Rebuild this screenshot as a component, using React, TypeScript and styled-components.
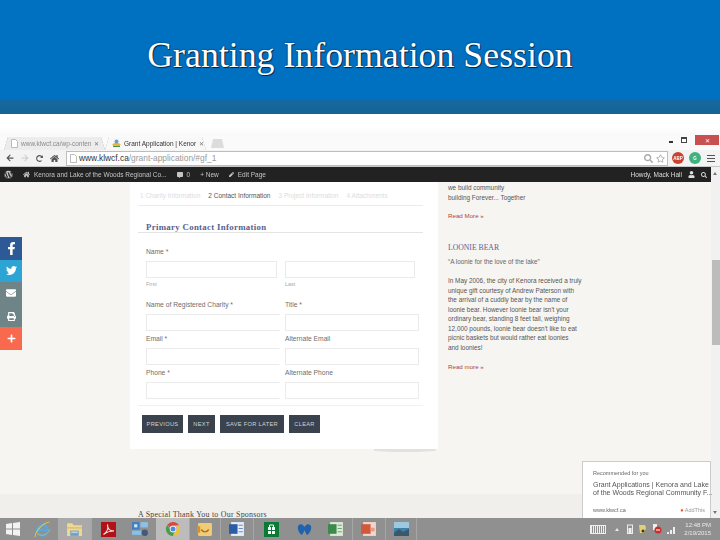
import React from "react";
import styled, { createGlobalStyle } from "styled-components";
import {
  FaFacebookF,
  FaTwitter,
  FaEnvelope,
  FaPrint,
  FaPlus,
  FaWordpress,
  FaHome,
  FaCommentAlt,
  FaPen,
  FaUser,
  FaSearch,
  FaRegStar,
  FaArrowLeft,
  FaArrowRight,
  FaRedoAlt,
} from "react-icons/fa";

const GlobalStyle = createGlobalStyle`
  html, body {
    margin: 0;
    padding: 0;
    background: #fff;
  }
  * {
    box-sizing: border-box;
  }
`;

const Slide = styled.div`
  position: relative;
  width: 720px;
  height: 540px;
  overflow: hidden;
  display: flex;
  flex-direction: column;
  background: #fff;
  font-family: "Liberation Sans", Arial, sans-serif;
`;

const Banner = styled.header`
  height: 100px;
  flex: none;
  display: flex;
  align-items: center;
  justify-content: center;
  padding-top: 9px;
  background: #0070c0;
`;

const BannerTitle = styled.h1`
  margin: 0;
  font: 400 35.8px "Liberation Serif", "Times New Roman", serif;
  color: #fff;
  text-shadow: 1px 1px 0 rgba(0, 0, 0, 0.55), 0 0 2px rgba(0, 0, 0, 0.6);
`;

const Strip = styled.div`
  height: 14px;
  flex: none;
  background: linear-gradient(#16689f, #136596);
`;

const Gap = styled.div`
  height: 21px;
  flex: none;
  background: linear-gradient(#fff 60%, #f9f9f9);
`;

const Browser = styled.div`
  flex: 1;
  min-height: 0;
  display: flex;
  flex-direction: column;
  filter: blur(0.35px);
`;

const TabStrip = styled.div`
  height: 15px;
  flex: none;
  display: flex;
  align-items: flex-end;
  padding-left: 4px;
  background: #fafafa;
`;

const TabShell = styled.div`
  width: 101px;
  height: 13px;
  flex: none;
  filter: drop-shadow(0 0 0.5px #9a9a9a);
`;

const TabBody = styled.div<{ $active?: boolean }>`
  height: 100%;
  display: flex;
  align-items: center;
  gap: 3px;
  padding: 0 6px 0 7px;
  font-size: 6.5px;
  white-space: nowrap;
  color: ${(p) => (p.$active ? "#333" : "#8a8a8a")};
  background: ${(p) => (p.$active ? "#f8f8f8" : "#ececec")};
  clip-path: polygon(4px 0, calc(100% - 4px) 0, 100% 100%, 0 100%);

  svg {
    flex: none;
  }
`;

const TabLabel = styled.span`
  flex: 1;
`;

const TabClose = styled.span`
  font-size: 6px;
  color: #777;
`;

const NewTab = styled.div`
  width: 13px;
  height: 9px;
  margin: 0 0 2px 5px;
  background: #dcdcdc;
  clip-path: polygon(2px 0, calc(100% - 2px) 0, 100% 100%, 0 100%);
`;

const WindowButtons = styled.div`
  margin-left: auto;
  align-self: flex-start;
  display: flex;
  align-items: center;
  height: 10px;
  gap: 8px;
  padding-right: 1px;
`;

const Minimize = styled.span`
  width: 4px;
  height: 2px;
  margin-top: 4px;
  background: #333;
`;

const Restore = styled.span`
  width: 6px;
  height: 6px;
  border: 1px solid #444;
  border-top-width: 2px;
`;

const CloseButton = styled.span`
  width: 24px;
  height: 10px;
  display: flex;
  align-items: center;
  justify-content: center;
  font-size: 6px;
  color: #fff;
  background: #c75050;
`;

const Toolbar = styled.div`
  height: 17px;
  flex: none;
  display: flex;
  align-items: center;
  padding: 0 3px 0 2px;
  background: #f3f3f3;
  border-bottom: 1px solid #c8c8c8;
`;

const NavGlyph = styled.span<{ $dim?: boolean }>`
  width: 15px;
  height: 15px;
  display: flex;
  align-items: center;
  justify-content: center;
  color: ${(p) => (p.$dim ? "#cfcfcf" : "#555")};
`;

const Omnibox = styled.div`
  flex: 1;
  height: 15px;
  display: flex;
  align-items: center;
  gap: 2px;
  margin: 0 4px 0 4px;
  padding: 0 2px 0 3px;
  font-size: 8.4px;
  background: #fff;
  border: 1px solid #bdbdbd;
`;

const UrlHost = styled.span`
  color: #333;
`;

const UrlPath = styled.span`
  margin-left: -2px;
  color: #999;
`;

const OmniIcons = styled.span`
  margin-left: auto;
  display: flex;
  align-items: center;
  gap: 3px;
  color: #aaa;
  font-size: 9px;
`;

const Badge = styled.span<{ $color: string }>`
  width: 12px;
  height: 12px;
  margin-right: 5px;
  display: flex;
  align-items: center;
  justify-content: center;
  font: 700 4.5px "Liberation Sans", sans-serif;
  color: #fff;
  border-radius: 50%;
  background: ${(p) => p.$color};
`;

const Burger = styled.span`
  width: 8px;
  height: 7px;
  margin: 0 2px 0 1px;
  border-top: 1px solid #555;
  border-bottom: 1px solid #555;
  background: linear-gradient(#555, #555) center / 100% 1px no-repeat;
`;

const Viewport = styled.div`
  flex: 1;
  min-height: 0;
  display: flex;
`;

const PageColumn = styled.div`
  flex: 1;
  min-width: 0;
  display: flex;
  flex-direction: column;
`;

const AdminBar = styled.div`
  height: 15px;
  flex: none;
  display: flex;
  align-items: center;
  gap: 10px;
  padding: 0 4px 0 4px;
  font-size: 6.5px;
  color: #c4c4c4;
  background: #222;
  white-space: nowrap;
`;

const AdminItem = styled.span`
  display: flex;
  align-items: center;
  gap: 4px;
`;

const AdminRight = styled(AdminItem)`
  margin-left: auto;
  gap: 6px;
  color: #ddd;
`;

const PageBody = styled.div`
  flex: 1;
  min-height: 0;
  display: flex;
  flex-direction: column;
  background: #f7f5f2;
`;

const ContentRow = styled.div`
  height: 312px;
  flex: none;
  display: flex;
  gap: 10px;
  padding-left: 130px;
`;

const SponsorBand = styled.div`
  flex: 1;
  min-height: 0;
  padding: 16px 0 0 138px;
  overflow: hidden;
  font: 400 7.9px/10px "Liberation Serif", serif;
  letter-spacing: 0.25px;
  color: #444;
  background: #f1efeb;
`;

const FormCard = styled.section`
  position: relative;
  width: 308px;
  height: 267px;
  flex: none;
  padding: 10px 15px 0 8px;
  background: #fff;

  &::after {
    content: "";
    position: absolute;
    right: 2px;
    bottom: -3px;
    width: 62px;
    height: 3px;
    border-radius: 0 0 50% 50%;
    background: rgba(0, 0, 0, 0.08);
  }
`;

const Steps = styled.div`
  display: flex;
  gap: 8px;
  height: 14px;
  padding: 0 0 4px 2px;
  font-size: 6.5px;
  white-space: nowrap;
  border-bottom: 1px solid #ececec;
`;

const Step = styled.span<{ $active?: boolean }>`
  color: ${(p) => (p.$active ? "#555" : "#ddd")};
`;

const SectionTitle = styled.h2`
  margin: 17px 0 0;
  padding: 0 0 0 8px;
  height: 10px;
  font: 700 8.8px/8px "Liberation Serif", serif;
  letter-spacing: 0.32px;
  color: #56618d;
  border-bottom: 1px solid #e4e4e4;
`;

const FieldGrid = styled.div`
  display: grid;
  grid-template-columns: 139px 134px;
  padding: 14px 0 0 8px;
`;

const Field = styled.div`
  display: flex;
  flex-direction: column;
`;

const FieldLabel = styled.label`
  height: 10px;
  font-size: 6.7px;
  line-height: 10px;
  color: #6e6e6e;
`;

const TextBox = styled.div<{ $width: number; $open?: boolean }>`
  width: ${(p) => p.$width}px;
  height: 17px;
  margin: 4px 0 3px;
  background: #fff;
  border: 1px solid #ebebeb;
  border-right-color: ${(p) => (p.$open ? "transparent" : "#ebebeb")};
`;

const Hint = styled.span`
  height: 21px;
  margin-top: -2px;
  font-size: 5.5px;
  line-height: 11px;
  color: #aaa;
`;

const FormFooter = styled.div`
  display: flex;
  gap: 5px;
  margin-top: 3px;
  padding: 9px 0 0 4px;
  border-top: 1px solid #f1f1f1;
`;

const ActionButton = styled.button<{ $width: number }>`
  width: ${(p) => p.$width}px;
  height: 18px;
  padding: 0;
  font: 400 5.7px "Liberation Sans", sans-serif;
  letter-spacing: 0.3px;
  color: #cfd2d6;
  background: #3a424d;
  border: none;
  border-radius: 0;
`;

const Sidebar = styled.aside`
  width: 134px;
  flex: none;
  padding-top: 1px;
  font-size: 6.4px;
  line-height: 9.55px;
  color: #555;
`;

const SideText = styled.p`
  margin: 0;
`;

const ReadMore = styled.a`
  display: block;
  margin-top: 9px;
  font-size: 6.2px;
  color: #a8444a;
`;

const SideTitle = styled.h3`
  margin: 21px 0 3px;
  font: 400 7.7px/12px "Liberation Serif", serif;
  color: #56618d;
`;

const SideQuote = styled.p`
  margin: 0 0 10px;
  color: #666;
`;

const Scrollbar = styled.div`
  position: relative;
  width: 9px;
  flex: none;
  display: flex;
  flex-direction: column;
  padding: 93px 0 0 1px;
  background: #f1f1f1;
`;

const ScrollArrow = styled.span<{ $down?: boolean }>`
  position: absolute;
  left: 2px;
  ${(p) => (p.$down ? "bottom: 4px;" : "top: 5px;")}
  border: 2.5px solid transparent;
  ${(p) =>
    p.$down
      ? "border-bottom: none; border-top: 3px solid #777;"
      : "border-top: none; border-bottom: 3px solid #777;"}
`;

const ScrollThumb = styled.div`
  height: 85px;
  background: #bcbcbc;
`;

const ShareBar = styled.div`
  position: absolute;
  left: 0;
  top: 237px;
  width: 22px;
  display: flex;
  flex-direction: column;
`;

const ShareButton = styled.div<{ $color: string }>`
  height: 22.6px;
  display: flex;
  align-items: center;
  justify-content: center;
  color: #fff;
  background: ${(p) => p.$color};
`;

const Recommend = styled.div`
  position: absolute;
  left: 582px;
  top: 461px;
  width: 129px;
  height: 57px;
  padding: 8px 2px 0 10px;
  display: flex;
  flex-direction: column;
  background: #fff;
  border: 1px solid #ccc;
  border-bottom: none;
  font-size: 5.5px;
  color: #666;
  white-space: nowrap;
`;

const RecommendTitle = styled.div`
  margin-top: 5px;
  font-size: 7px;
  line-height: 8px;
  color: #555;
`;

const RecommendFoot = styled.div`
  display: flex;
  justify-content: space-between;
  margin-top: 10px;
  padding-right: 3px;
`;

const AddThis = styled.span`
  color: #999;
`;

const AddThisMark = styled.span`
  color: #e2582c;
`;

const Taskbar = styled.footer`
  height: 22px;
  flex: none;
  display: flex;
  align-items: center;
  background: #909090;
`;

const TaskSlot = styled.div<{ $width: number; $state?: "open" | "lit" | "active" }>`
  width: ${(p) => p.$width}px;
  height: 22px;
  flex: none;
  display: flex;
  align-items: center;
  justify-content: center;
  background: ${(p) =>
    p.$state === "active" ? "#bcbcbc" : p.$state === "lit" ? "#a9a9a9" : "transparent"};
  border-right: ${(p) => (p.$state ? "1px solid #a6a6a6" : "none")};
`;

const Tray = styled.div`
  margin-left: auto;
  display: flex;
  align-items: center;
  gap: 5px;
  padding-right: 9px;
`;

const Keyboard = styled.span`
  width: 16px;
  height: 9px;
  margin-right: 4px;
  border: 1px solid #eee;
  background: repeating-linear-gradient(90deg, #eee 0 1px, #8f8f8f 1px 2px);
`;

const TrayCaret = styled.span`
  width: 0;
  height: 0;
  margin-right: 3px;
  border: 2.5px solid transparent;
  border-top: none;
  border-bottom: 3px solid #e8e8e8;
`;

const Clock = styled.div`
  margin-left: 3px;
  font-size: 6px;
  line-height: 8px;
  text-align: right;
  color: #e9e9e9;
`;

const WinLogo = () => (
  <svg width="14" height="14" viewBox="0 0 14 14">
    <path d="M0 2l6-1v5.500H0zM7 1l7-1v6.500H7zM0 7.500h6V13l-6-1zM7 7.500h7V14l-7-1z" fill="#f2f2f2" />
  </svg>
);

const IeIcon = () => (
  <svg width="17" height="17" viewBox="0 0 16 16">
    <path d="M3.200 8.500H13A5 5 0 1 0 11.800 12" fill="none" stroke="#56a8e0" strokeWidth="2.200" />
    <path d="M1 15C1.500 9.500 8 2 14.500 1" fill="none" stroke="#e8c04c" strokeWidth="1" />
    <path d="M3 12C7 15 13 13 15 8" fill="none" stroke="#e8c04c" strokeWidth=".6" />
  </svg>
);

const FolderIcon = () => (
  <svg width="17" height="15" viewBox="0 0 16 14">
    <path d="M1 1h5l1 2h8v10H1z" fill="#efd88f" />
    <path d="M1 5h14v1H1z" fill="#d4b566" />
    <path d="M4 8h8v5H4z" fill="#6fa3c8" />
    <path d="M5 9h6v1H5z" fill="#dfeaf2" />
  </svg>
);

const PdfIcon = () => (
  <svg width="15" height="15" viewBox="0 0 15 15">
    <rect width="15" height="15" fill="#b01217" />
    <path d="M2.500 12.500c3-2 5-6 4-10 0 4 2 7 6.500 6.500-4 0-7.500 1-10.500 3.500z" fill="none" stroke="#f7e3e3" strokeWidth="1.100" />
  </svg>
);

const OutlookTiles = () => (
  <svg width="17" height="16" viewBox="0 0 16 15">
    <rect x="0" y="1" width="7" height="7" fill="#3f7fc4" />
    <rect x="8" y="1" width="7" height="5" fill="#8cc0e6" />
    <rect x="0" y="9" width="9" height="4" fill="#8ac0e6" />
    <rect x="2" y="3" width="3" height="3" fill="#cfe5f5" />
    <circle cx="12" cy="11" r="3" fill="#44597c" />
  </svg>
);

const ChromeIcon = () => (
  <svg width="16" height="16" viewBox="0 0 16 16">
    <path d="M8 1a7 7 0 0 1 6.100 3.500H8A3.500 3.500 0 0 0 4.800 6.700L2.400 3.700A7 7 0 0 1 8 1z" fill="#d9473d" />
    <path d="M14.100 4.500A7 7 0 0 1 8 15l3-5a3.500 3.500 0 0 0 0-5.500z" fill="#f2c230" />
    <path d="M2.400 3.700L5 8.500A3.500 3.500 0 0 0 9 11.400L8 15A7 7 0 0 1 2.400 3.700z" fill="#4a9d4f" />
    <circle cx="8" cy="8" r="3.200" fill="#fff" />
    <circle cx="8" cy="8" r="2.500" fill="#4c8bdc" />
  </svg>
);

const MailIcon = () => (
  <svg width="16" height="15" viewBox="0 0 15 14">
    <rect x="1" y="1" width="13" height="12" rx="1" fill="#f0cc76" />
    <path d="M4 7c2 3 5 3 7 0" fill="none" stroke="#a8701f" strokeWidth="1.300" />
    <rect x="0" y="4" width="3" height="6" fill="#d98f2b" />
  </svg>
);

const WordIcon = () => (
  <svg width="16" height="16" viewBox="0 0 15 15">
    <rect x="2" y="1" width="12" height="13" fill="#e6edf6" />
    <rect x="0" y="3" width="8" height="9" fill="#2b5ca6" />
    <path d="M9 4h4M9 7h4M9 10h4" stroke="#6a8fc6" />
  </svg>
);

const StoreIcon = () => (
  <svg width="15" height="15" viewBox="0 0 15 15">
    <rect width="15" height="15" fill="#0b7a35" />
    <rect x="4" y="5" width="7" height="7" fill="#fff" />
    <path d="M5.500 5V3h4v2" fill="none" stroke="#fff" />
    <path d="M7 5h1v7H7zM4 8h7v1H4z" fill="#0b7a35" />
  </svg>
);

const MalwareIcon = () => (
  <svg width="15" height="13" viewBox="0 0 15 13">
    <path d="M1 3c2-3 5-2 6.500 1C9 1 12 0 14 3c1 4-2 8-4 9-1-2-2-3-2.500-5C7 9 6 10 5 12 3 11 0 7 1 3z" fill="#1f62ad" />
  </svg>
);

const ExcelIcon = () => (
  <svg width="16" height="16" viewBox="0 0 15 15">
    <rect x="2" y="1" width="12" height="13" fill="#dbe9d6" />
    <rect x="0" y="3" width="8" height="9" fill="#3c8a4a" />
    <path d="M9 4h4M9 7h4M9 10h4" stroke="#70a977" />
  </svg>
);

const SlidesIcon = () => (
  <svg width="16" height="16" viewBox="0 0 15 15">
    <rect x="2" y="1" width="12" height="13" fill="#f0d6cc" />
    <rect x="0" y="3" width="9" height="9" fill="#d2583a" />
    <circle cx="11" cy="8" r="2" fill="#e89a80" />
  </svg>
);

const PhotoIcon = () => (
  <svg width="15" height="14" viewBox="0 0 15 14">
    <rect width="15" height="14" fill="#3f7fa8" />
    <rect y="0" width="15" height="6" fill="#9cc9e0" />
    <path d="M0 11l5-4 4 3 6-3v7H0z" fill="#39596a" />
  </svg>
);

const ThumbTree = () => (
  <svg width="9" height="9" viewBox="0 0 9 9">
    <path d="M0 6c2-3 7-3 9 0z" fill="#e5b83a" />
    <path d="M1 6.500h7V8H1z" fill="#4c8f59" />
    <circle cx="4.500" cy="2.500" r="2" fill="#6aa0d0" />
  </svg>
);

const PageGlyph = () => (
  <svg width="7" height="9" viewBox="0 0 7 9">
    <path d="M.5.500h4l2 2v6h-6z" fill="#fff" stroke="#bbb" />
  </svg>
);

const SignalBars = () => (
  <svg width="9" height="9" viewBox="0 0 9 9">
    <path d="M0 7h2v2H0zM3 5h2v4H3zM6 2h2v7H6z" fill="#eee" />
  </svg>
);

const FlagBadge = () => (
  <svg width="9" height="10" viewBox="0 0 9 10">
    <path d="M1 1h6l1 3-2 5H2z" fill="#e3cf7a" />
    <circle cx="5" cy="7" r="1.500" fill="#333" />
  </svg>
);

const NoEntry = () => (
  <svg width="10" height="10" viewBox="0 0 10 10">
    <rect x="1" y="0" width="4" height="6" fill="#eee" />
    <circle cx="6" cy="6" r="3.500" fill="#c9302c" />
    <path d="M4 6h4" stroke="#fff" />
  </svg>
);

const Battery = () => (
  <svg width="6" height="10" viewBox="0 0 6 10">
    <rect x=".5" y="1" width="5" height="8.500" fill="none" stroke="#eee" />
    <rect x="1.500" y="4" width="3" height="5" fill="#eee" />
  </svg>
);

const taskItems: { width: number; state?: "open" | "lit" | "active"; icon: React.ReactNode }[] = [
  { width: 26, icon: <WinLogo /> },
  { width: 32, icon: <IeIcon /> },
  { width: 34, state: "lit", icon: <FolderIcon /> },
  { width: 32, icon: <PdfIcon /> },
  { width: 32, icon: <OutlookTiles /> },
  { width: 34, state: "active", icon: <ChromeIcon /> },
  { width: 31, state: "open", icon: <MailIcon /> },
  { width: 33, state: "open", icon: <WordIcon /> },
  { width: 35, icon: <StoreIcon /> },
  { width: 31, icon: <MalwareIcon /> },
  { width: 33, state: "open", icon: <ExcelIcon /> },
  { width: 33, state: "open", icon: <SlidesIcon /> },
  { width: 31, state: "open", icon: <PhotoIcon /> },
];

export default function App() {
  return (
    <Slide>
      <GlobalStyle />
      <Banner>
        <BannerTitle>Granting Information Session</BannerTitle>
      </Banner>
      <Strip />
      <Gap />
      <Browser>
        <TabStrip>
          <TabShell>
            <TabBody>
              <PageGlyph />
              <TabLabel>www.klwcf.ca/wp-conten</TabLabel>
              <TabClose>✕</TabClose>
            </TabBody>
          </TabShell>
          <TabShell>
            <TabBody $active>
              <ThumbTree />
              <TabLabel>Grant Application | Kenor</TabLabel>
              <TabClose>✕</TabClose>
            </TabBody>
          </TabShell>
          <NewTab />
          <WindowButtons>
            <Minimize />
            <Restore />
            <CloseButton>✕</CloseButton>
          </WindowButtons>
        </TabStrip>
        <Toolbar>
          <NavGlyph>
            <FaArrowLeft size={8} />
          </NavGlyph>
          <NavGlyph $dim>
            <FaArrowRight size={8} />
          </NavGlyph>
          <NavGlyph>
            <FaRedoAlt size={7} />
          </NavGlyph>
          <NavGlyph>
            <FaHome size={9} />
          </NavGlyph>
          <Omnibox>
            <PageGlyph />
            <UrlHost>www.klwcf.ca</UrlHost>
            <UrlPath>/grant-application/#gf_1</UrlPath>
            <OmniIcons>
              <FaSearch />
              <FaRegStar />
            </OmniIcons>
          </Omnibox>
          <Badge $color="#c9422f">ABP</Badge>
          <Badge $color="#3fb27f">G</Badge>
          <Burger />
        </Toolbar>
        <Viewport>
          <PageColumn>
            <AdminBar>
              <FaWordpress size={9} />
              <AdminItem>
                <FaHome size={7} />
                Kenora and Lake of the Woods Regional Co...
              </AdminItem>
              <AdminItem>
                <FaCommentAlt size={6} />0
              </AdminItem>
              <AdminItem>+ New</AdminItem>
              <AdminItem>
                <FaPen size={5} />
                Edit Page
              </AdminItem>
              <AdminRight>
                Howdy, Mack Hall
                <FaUser size={7} />
                <FaSearch size={6} />
              </AdminRight>
            </AdminBar>
            <PageBody>
              <ContentRow>
                <FormCard>
                  <Steps>
                    <Step>1 Charity Information</Step>
                    <Step $active>2 Contact Information</Step>
                    <Step>3 Project Information</Step>
                    <Step>4 Attachments</Step>
                  </Steps>
                  <SectionTitle>Primary Contact Information</SectionTitle>
                  <FieldGrid>
                    <Field>
                      <FieldLabel>Name *</FieldLabel>
                      <TextBox $width={131} />
                      <Hint>First</Hint>
                    </Field>
                    <Field>
                      <FieldLabel>&nbsp;</FieldLabel>
                      <TextBox $width={130} />
                      <Hint>Last</Hint>
                    </Field>
                    <Field>
                      <FieldLabel>Name of Registered Charity *</FieldLabel>
                      <TextBox $width={134} $open />
                    </Field>
                    <Field>
                      <FieldLabel>Title *</FieldLabel>
                      <TextBox $width={134} />
                    </Field>
                    <Field>
                      <FieldLabel>Email *</FieldLabel>
                      <TextBox $width={134} $open />
                    </Field>
                    <Field>
                      <FieldLabel>Alternate Email</FieldLabel>
                      <TextBox $width={134} />
                    </Field>
                    <Field>
                      <FieldLabel>Phone *</FieldLabel>
                      <TextBox $width={134} $open />
                    </Field>
                    <Field>
                      <FieldLabel>Alternate Phone</FieldLabel>
                      <TextBox $width={134} />
                    </Field>
                  </FieldGrid>
                  <FormFooter>
                    <ActionButton $width={41}>PREVIOUS</ActionButton>
                    <ActionButton $width={27}>NEXT</ActionButton>
                    <ActionButton $width={64}>SAVE FOR LATER</ActionButton>
                    <ActionButton $width={31}>CLEAR</ActionButton>
                  </FormFooter>
                </FormCard>
                <Sidebar>
                  <SideText>
                    we build community
                    <br />
                    building Forever... Together
                  </SideText>
                  <ReadMore>Read More »</ReadMore>
                  <SideTitle>LOONIE BEAR</SideTitle>
                  <SideQuote>“A loonie for the love of the lake”</SideQuote>
                  <SideText>
                    In May 2006, the city of Kenora received a truly unique gift courtesy of Andrew Paterson with the arrival of a cuddly bear by the name of loonie bear. However loonie bear isn't your ordinary bear, standing 8 feet tall, weighing 12,000 pounds, loonie bear doesn't like to eat picnic baskets but would rather eat loonies
                    <br />
                    and loonies!
                  </SideText>
                  <ReadMore>Read more »</ReadMore>
                </Sidebar>
              </ContentRow>
              <SponsorBand>A Special Thank You to Our Sponsors</SponsorBand>
            </PageBody>
          </PageColumn>
          <Scrollbar>
            <ScrollArrow />
            <ScrollThumb />
            <ScrollArrow $down />
          </Scrollbar>
        </Viewport>
        <Taskbar>
          {taskItems.map((item, i) => (
            <TaskSlot key={i} $width={item.width} $state={item.state}>
              {item.icon}
            </TaskSlot>
          ))}
          <Tray>
            <Keyboard />
            <TrayCaret />
            <Battery />
            <FlagBadge />
            <NoEntry />
            <SignalBars />
            <Clock>
              12:48 PM
              <br />
              2/19/2015
            </Clock>
          </Tray>
        </Taskbar>
      </Browser>
      <ShareBar>
        <ShareButton $color="#2d5a96">
          <FaFacebookF size={13} />
        </ShareButton>
        <ShareButton $color="#2ca5d4">
          <FaTwitter size={11} />
        </ShareButton>
        <ShareButton $color="#6f8486">
          <FaEnvelope size={10} />
        </ShareButton>
        <ShareButton $color="#6f8486">
          <FaPrint size={9} />
        </ShareButton>
        <ShareButton $color="#f8694d">
          <FaPlus size={9} />
        </ShareButton>
      </ShareBar>
      <Recommend>
        Recommended for you
        <RecommendTitle>
          Grant Applications | Kenora and Lake
          <br />
          of the Woods Regional Community F...
        </RecommendTitle>
        <RecommendFoot>
          <span>www.klwcf.ca</span>
          <AddThis>
            <AddThisMark>●</AddThisMark> AddThis
          </AddThis>
        </RecommendFoot>
      </Recommend>
    </Slide>
  );
}
